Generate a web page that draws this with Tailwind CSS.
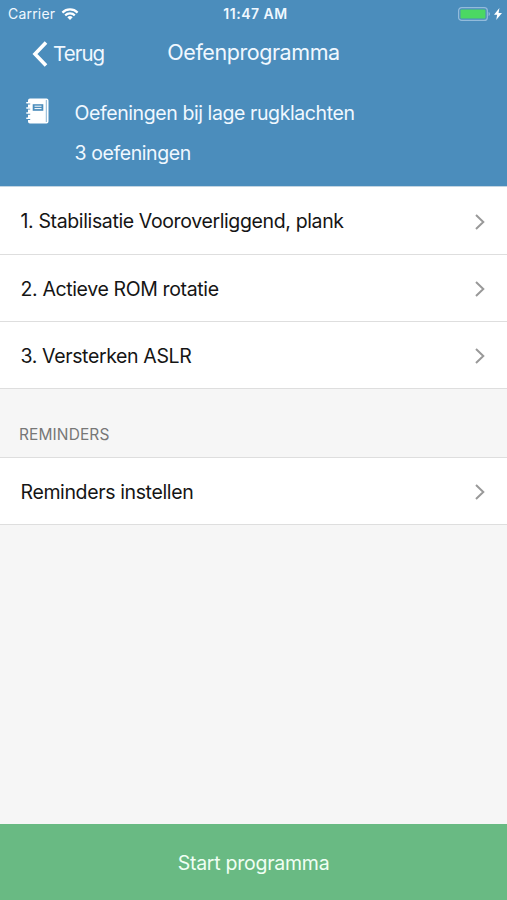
<!DOCTYPE html>
<html lang="nl">
<head>
  <meta charset="UTF-8" />
  <meta name="viewport" content="width=device-width, initial-scale=1.0" />
  <title>Oefenprogramma</title>
  <script src="https://cdn.jsdelivr.net/npm/@tailwindcss/browser@4"></script>
</head>
<body class="bg-[#f6f6f6] font-['Inter',sans-serif] h-[900px] flex flex-col overflow-hidden">

  <header class="h-[187px] shrink-0 bg-[#4b8dbc] text-[#f0f8ff] border-b border-[#c3d5e2]">
    <!-- Status bar -->
    <div class="h-7 grid grid-cols-3 items-center pl-2 pr-[5px] pb-px text-[14px]">
      <div class="flex items-center gap-[6px]">
        <span class="tracking-[0.2px]">Carrier</span>
        <svg class="w-[18px] h-3" viewBox="0 0 17 12" fill="none" stroke="white" stroke-width="2.2">
          <path d="M0.9 4.6a10.8 10.8 0 0 1 15.2 0" />
          <path d="M3.7 7.4a6.8 6.8 0 0 1 9.6 0" />
          <path d="M8.5 12L5.8 9.3a3.9 3.9 0 0 1 5.4 0z" fill="white" stroke="none" />
        </svg>
      </div>
      <span class="text-center font-semibold text-[14px] tracking-[0.5px] pl-px">11:47 AM</span>
      <div class="flex items-center justify-end gap-1">
        <svg class="w-8 h-[14px]" viewBox="0 0 31 14" preserveAspectRatio="none">
          <rect x="0.6" y="0.6" width="27.8" height="12.8" rx="3" fill="none" stroke="#93bbdb" stroke-width="1.2" />
          <rect x="2.4" y="2.4" width="24.2" height="9.2" rx="1.2" fill="#4bd863" />
          <path d="M29.6 5v4q1.4-.6 1.4-2t-1.4-2z" fill="#93bbdb" />
        </svg>
        <svg class="w-2 h-3" viewBox="0 0 8 12" fill="white"><path d="M5.4 0L0 6.8h3.2L2.2 12L8 4.9H4.6z" /></svg>
      </div>
    </div>

    <!-- Navigation bar -->
    <nav class="h-[50px] grid grid-cols-3 items-center">
      <a class="flex items-center gap-[5px] pl-8 pt-0.5 text-[20.5px] tracking-[-0.95px]">
        <svg class="w-4 h-[26px]" viewBox="0 0 16 26" fill="none" stroke="white" stroke-width="3.6"><path d="M14 1.5L3 13l11 11.5" /></svg>
        <span>Terug</span>
      </a>
      <h1 class="justify-self-center text-[21.5px] tracking-[-0.43px] whitespace-nowrap -mt-0.5">Oefenprogramma</h1>
    </nav>

    <div class="flex pl-[26px] pt-[15px]">
      <svg class="w-6 h-[26px] mt-[5px]" viewBox="0 0 24 26">
        <path d="M4 0.5h16.5a2 2 0 0 1 2 2v21a2 2 0 0 1-2 2H4a2 2 0 0 1-2-2v-21a2 2 0 0 1 2-2z" fill="white" />
        <path d="M20.3 2v22" stroke="#7aaacd" stroke-width="0.9" />
        <path d="M6.7 6.2h10.6v6.6H6.7z" fill="#4b8dbc" />
        <path d="M8.5 8.2h7M8.5 10.6h7" stroke="white" stroke-width="1" />
        <path d="M1 5.5h3.2M1 10.7h3.2M1 15.9h3.2M1 21.1h3.2" stroke="#4b8dbc" stroke-width="1.8" />
        <path d="M0.8 4.7h3.6M0.8 9.9h3.6M0.8 15.1h3.6M0.8 20.3h3.6" stroke="white" stroke-width="1.5" stroke-linecap="round" />
      </svg>
      <div class="pl-[24.5px] text-[19.5px] tracking-[-0.41px] leading-10 whitespace-nowrap">
        <p>Oefeningen bij lage rugklachten</p>
        <p>3 oefeningen</p>
      </div>
    </div>
  </header>

  <main class="grow text-[#151515] text-[19.5px] tracking-[-0.37px]">
    <ul class="bg-white">
      <li class="h-[68px] flex items-center justify-between pl-[20.5px] pr-[22px] pt-0.5 border-b border-[#dedede]">
        <span class="pt-px">1. Stabilisatie Vooroverliggend, plank</span>
        <svg class="w-[10px] h-4" viewBox="0 0 10 16" fill="none" stroke="#999" stroke-width="2"><path d="M1 1l7.3 7L1 15" /></svg>
      </li>
      <li class="h-[67px] flex items-center justify-between pl-[20.5px] pr-[22px] pt-0.5 border-b border-[#dedede]">
        <span class="pt-px">2. Actieve ROM rotatie</span>
        <svg class="w-[10px] h-4" viewBox="0 0 10 16" fill="none" stroke="#999" stroke-width="2"><path d="M1 1l7.3 7L1 15" /></svg>
      </li>
      <li class="h-[67px] flex items-center justify-between pl-[20.5px] pr-[22px] pt-0.5 border-b border-[#dedede]">
        <span class="pt-px">3. Versterken ASLR</span>
        <svg class="w-[10px] h-4" viewBox="0 0 10 16" fill="none" stroke="#999" stroke-width="2"><path d="M1 1l7.3 7L1 15" /></svg>
      </li>
    </ul>

    <h2 class="h-[69px] pl-[19px] pt-[34px] text-[15.5px] tracking-[0.1px] leading-6 text-[#777] border-b border-[#dedede]">REMINDERS</h2>
    <div class="h-[67px] flex items-center justify-between pl-[20.5px] pr-[22px] pt-0.5 bg-white border-b border-[#dedede]">
      <span class="pt-px">Reminders instellen</span>
      <svg class="w-[10px] h-4" viewBox="0 0 10 16" fill="none" stroke="#999" stroke-width="2"><path d="M1 1l7.3 7L1 15" /></svg>
    </div>
  </main>

  <button class="h-[76px] shrink-0 bg-[#69ba83] text-[#f0fff4] text-[19.5px] tracking-[-0.25px] pt-1">Start programma</button>

</body>
</html>
